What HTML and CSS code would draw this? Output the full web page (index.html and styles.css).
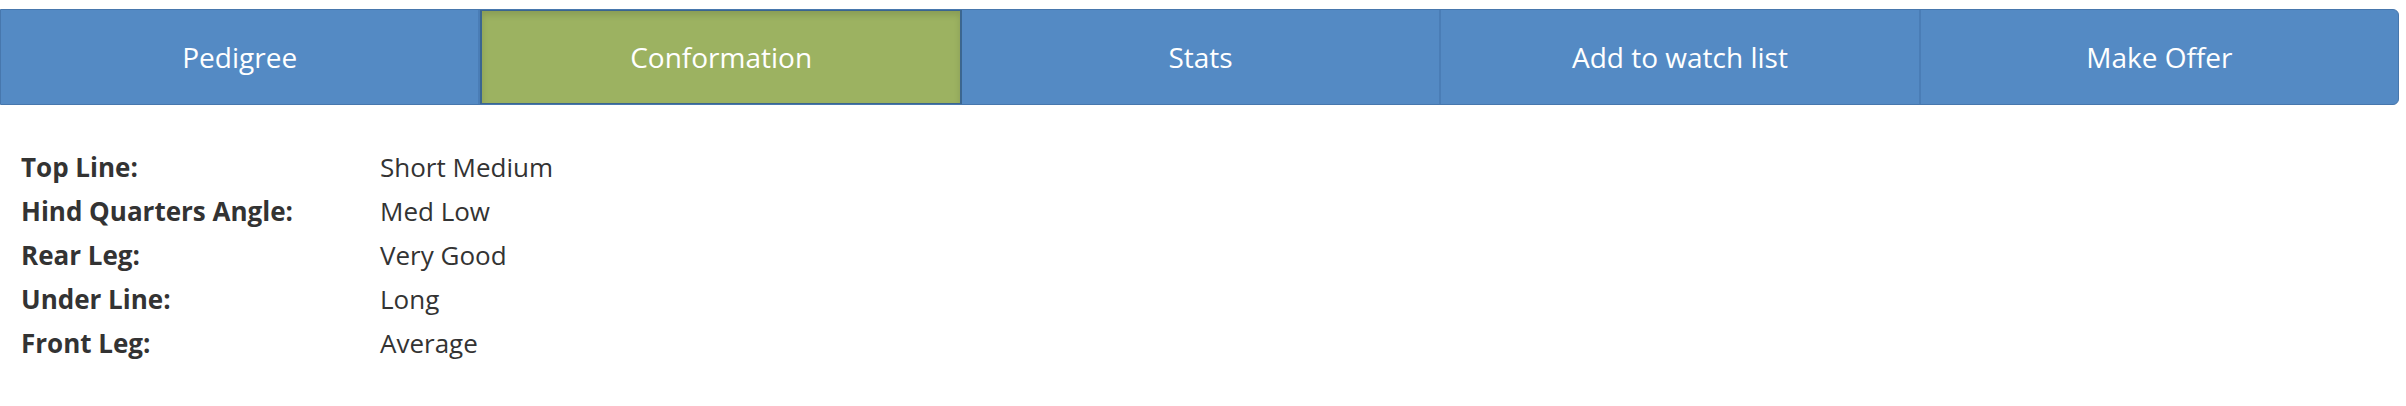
FILE: index.html
```html
<!DOCTYPE html>
<html lang="en">
<head>
    <meta charset="UTF-8">
    <title>Conformation</title>
    <link rel="stylesheet" href="styles.css">
</head>
<body>
    <!-- Onglets -->
    <ul class="tabs">
        <li class="tab">Pedigree</li>
        <li class="tab active">Conformation</li>
        <li class="tab">Stats</li>
        <li class="tab">Add to watch list</li>
        <li class="tab">Make Offer</li>
    </ul>

    <!-- Détails -->
    <dl class="details">
        <dt>Top Line:</dt>
        <dd>Short Medium</dd>
        <dt>Hind Quarters Angle:</dt>
        <dd>Med Low</dd>
        <dt>Rear Leg:</dt>
        <dd>Very Good</dd>
        <dt>Under Line:</dt>
        <dd>Long</dd>
        <dt>Front Leg:</dt>
        <dd>Average</dd>
    </dl>
</body>
</html>
```

FILE: styles.css
```css
* {
    margin: 0;
    padding: 0;
    box-sizing: border-box;
}

body {
    font-family: 'Open Sans', sans-serif;
    background: #fff;
    color: #333;
}

/* Onglets */
.tabs {
    list-style: none;
    display: flex;
    width: 2399px;
    height: 96px;
    margin-top: 9px;
    background: #548ac4;
    border: 1px solid #4777ad;
    border-radius: 0 6px 6px 0;
    overflow: hidden;
}

.tab {
    flex: 1;
    display: flex;
    align-items: center;
    justify-content: center;
    color: #fff;
    font-size: 28px;
    border-right: 2px solid #4a7db6;
}

.tab:last-child {
    border-right: none;
}

.tab.active {
    background: #9cb261;
    border: 2px solid #3b6690;
    margin-top: -1px;
    margin-bottom: -1px;
    box-shadow: inset 0 4px 6px rgba(0, 0, 0, 0.12);
}

/* Détails */
.details {
    display: grid;
    grid-template-columns: 359px auto;
    margin: 40px 0 0 21px;
    font-size: 26px;
    line-height: 44px;
}

.details dt {
    font-weight: 700;
    color: #333;
}

.details dd {
    color: #333;
}
```
